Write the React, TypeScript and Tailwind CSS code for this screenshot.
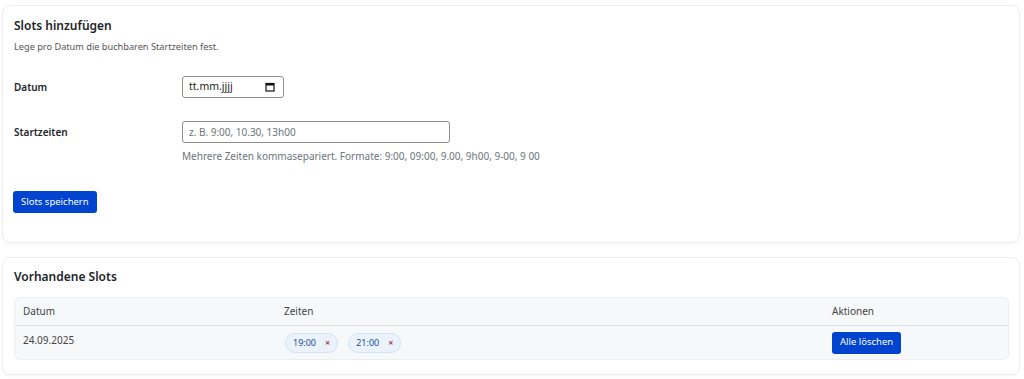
export default function App() {
  const slots = [{ date: "24.09.2025", times: ["19:00", "21:00"] }];

  return (
    <div className="min-h-[379px] bg-white px-[2px] pt-[5px] text-[#212529]" style={{ fontFamily: '"Noto Sans", "Open Sans", sans-serif' }}>
      {/* Slots hinzufügen */}
      <div className="w-[1018px] h-[238px] rounded-lg border border-[#eeeeee] shadow-[0_1px_3px_rgba(0,0,0,0.04)] px-[11px] pt-[11px]">
        <h2 className="text-[12px] font-semibold leading-[18px]">Slots hinzufügen</h2>
        <p className="mt-[5px] text-[9.2px] leading-[14px] text-[#555]">
          Lege pro Datum die buchbaren Startzeiten fest.
        </p>

        <div className="mt-[22px] flex items-center h-[22px]">
          <label className="w-[168px] text-[10px] font-semibold">Datum</label>
          <div className="w-[102px] h-[22px] rounded-[3px] border border-[#8f8f8f] flex items-center justify-between pl-[6px] pr-[8px]">
            <span className="text-[10.5px] text-[#222]">tt.mm.jjjj</span>
            <svg width="10" height="10" viewBox="0 0 10 10">
              <rect x="1" y="1.5" width="8" height="7.5" fill="none" stroke="#111" strokeWidth="1.2" />
              <rect x="1" y="1.5" width="8" height="2" fill="#111" />
            </svg>
          </div>
        </div>

        <div className="mt-[23px] flex">
          <label className="w-[168px] text-[10px] font-semibold leading-[22px]">Startzeiten</label>
          <div>
            <div className="w-[268px] h-[22px] rounded-[3px] border border-[#8f8f8f] flex items-center px-[6px]">
              <span className="text-[10px] text-[#6c757d]">z. B. 9:00, 10.30, 13h00</span>
            </div>
            <p className="mt-[6px] text-[10px] leading-[14px] text-[#6c757d]">
              Mehrere Zeiten kommasepariert. Formate: 9:00, 09:00, 9.00, 9h00, 9-00, 9 00
            </p>
          </div>
        </div>

        <button className="mt-[28px] -ml-[1px] h-[22px] px-[8px] rounded-[3px] bg-[#0043ce] text-white text-[9.5px]">
          Slots speichern
        </button>
      </div>

      {/* Vorhandene Slots */}
      <div className="mt-[14px] w-[1018px] h-[118px] rounded-lg border border-[#eeeeee] shadow-[0_1px_3px_rgba(0,0,0,0.04)] px-[11px] pt-[10px]">
        <h2 className="text-[12px] font-semibold leading-[18px]">Vorhandene Slots</h2>
        <div className="mt-[11px] w-[995px] rounded-md bg-[#f7f8f9] border border-[#eceef0] overflow-hidden">
          <div className="grid grid-cols-[269px_540px_1fr] h-[28px] items-center border-b border-[#dcdfe3] text-[10px] text-[#444]">
            <div className="pl-[8px]">Datum</div>
            <div>Zeiten</div>
            <div className="pl-[8px]">Aktionen</div>
          </div>
          {slots.map((s) => (
            <div key={s.date} className="grid grid-cols-[269px_540px_1fr] h-[33px]">
              <div className="pl-[8px] pt-[7px] text-[10px] text-[#444]">{s.date}</div>
              <div className="flex gap-[10px] items-center pl-[1px]">
                {s.times.map((t) => (
                  <span key={t} className="h-[20px] px-[7px] rounded-full bg-[#eaf2fb] border border-[#d4e3f6] flex items-center gap-[9px] text-[9px] text-[#1d4f91]">
                    {t}
                    <span className="text-[9px] font-bold text-[#b5364a] leading-none">×</span>
                  </span>
                ))}
              </div>
              <div className="flex items-center pl-[8px]">
                <button className="h-[22px] px-[8px] rounded-[3px] bg-[#0043ce] text-white text-[9.5px]">
                  Alle löschen
                </button>
              </div>
            </div>
          ))}
        </div>
      </div>
    </div>
  );
}
